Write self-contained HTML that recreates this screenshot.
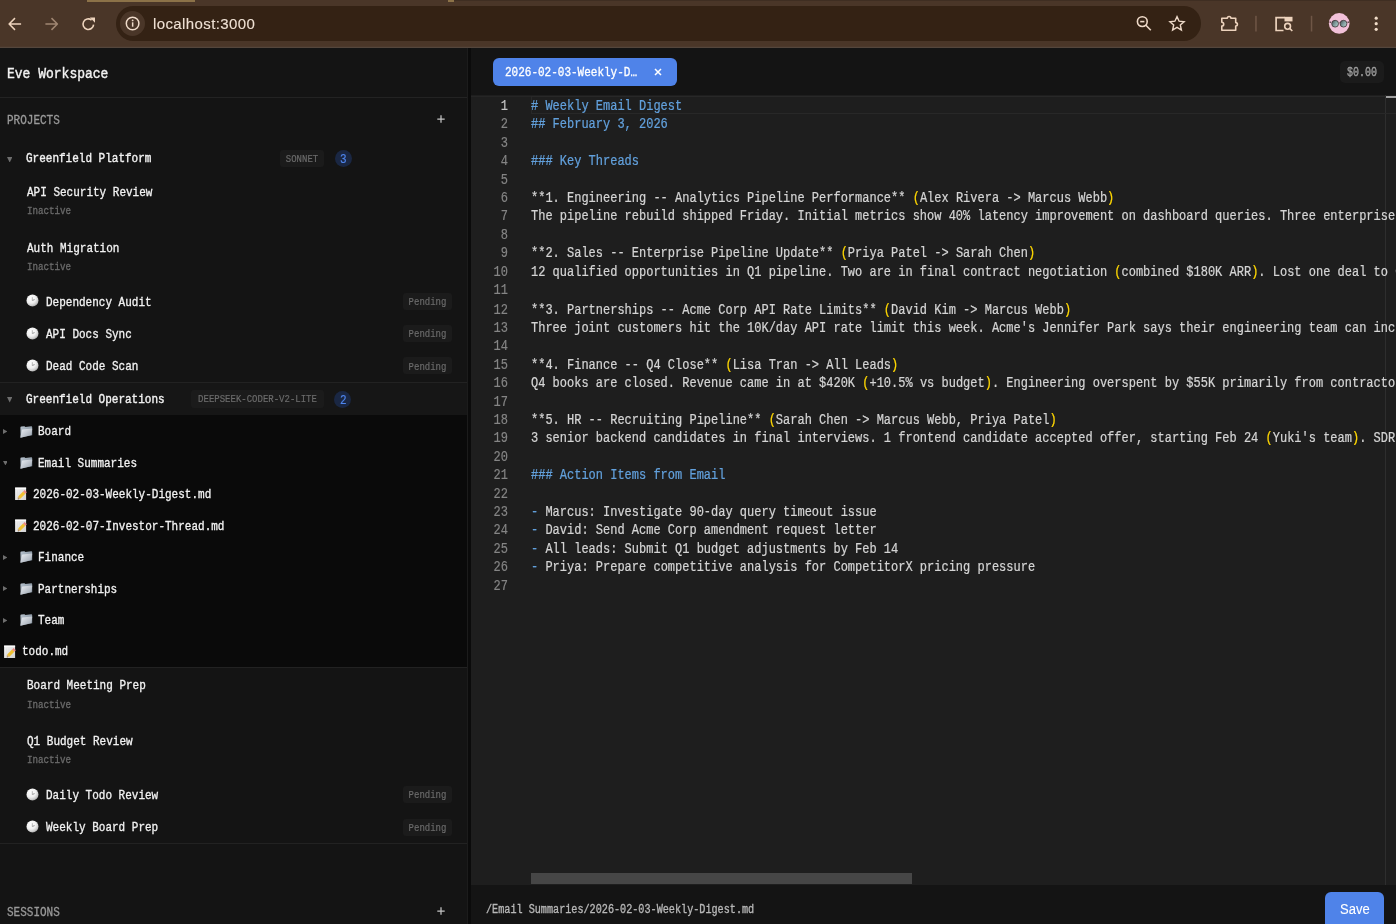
<!DOCTYPE html>
<html><head><meta charset="utf-8"><title>Eve Workspace</title>
<style>
html,body{margin:0;padding:0;}
body{width:1396px;height:924px;overflow:hidden;position:relative;background:#141414;font-family:"Liberation Mono",monospace;}
.t{position:absolute;white-space:pre;transform:scaleY(1.1);will-change:transform;}
.r{position:absolute;}
.code{position:absolute;font-size:12px;-webkit-text-stroke:0.2px currentColor;line-height:16.05217391304348px;white-space:pre;color:#d4d4d4;width:865px;overflow:hidden;transform:translateY(0.35px) scaleY(1.15);transform-origin:0 0;will-change:transform;}
.code .ln{height:16.05217391304348px;}
.h{color:#62a0dc;}
.b{color:#ffd700;}
.gut{position:absolute;width:37px;font-size:12px;-webkit-text-stroke:0.15px currentColor;line-height:16.05217391304348px;text-align:right;color:#858585;transform:translateY(0.35px) scaleY(1.15);transform-origin:0 0;will-change:transform;}
.gut .act{color:#c6c6c6;}
</style></head><body>
<div class="r" style="left:0px;top:0px;width:1396px;height:48px;background:#4a3628;"></div>
<div class="r" style="left:87px;top:0px;width:108px;height:1.5px;background:#8c7248;"></div>
<div class="r" style="left:448px;top:0px;width:6px;height:1.5px;background:#8c7248;"></div>
<div class="r" style="left:454px;top:0px;width:942px;height:1.2px;background:#3f2e22;"></div>
<div class="r" style="left:116px;top:6.3px;width:1085px;height:34.6px;background:#342214;border-radius:17.3px;"></div>
<div class="r" style="left:120px;top:11px;width:25px;height:25px;background:#4a3628;border-radius:50%;"></div>
<svg class="r" style="left:0;top:0" width="1396" height="48">
<g fill="none" stroke="#eed4bd" stroke-width="1.5" stroke-linejoin="round">
<path d="M21.1 24H9.9 M15 18.1L9.1 24L15 29.9"/>
</g>
<g fill="none" stroke="#a08672" stroke-width="1.5" stroke-linejoin="round">
<path d="M45.4 24H56.6 M51.5 18.1L57.4 24L51.5 29.9"/>
</g>
<path fill="none" stroke="#eed4bd" stroke-width="1.6" d="M93.6 24.6 A5.3 5.3 0 1 1 91.6 20"/>
<path d="M89.9 17.6 L95 17.6 L95 22.7 Z" fill="#eed4bd"/>
<circle cx="132.6" cy="23.5" r="6.3" fill="none" stroke="#f0dccb" stroke-width="1.5"/>
<rect x="131.9" y="22.3" width="1.5" height="4.4" fill="#f0dccb"/>
<circle cx="132.65" cy="20.4" r="0.9" fill="#f0dccb"/>
<g fill="none" stroke="#eed9c8" stroke-width="1.6">
<circle cx="1142.3" cy="21.6" r="4.9"/>
<path d="M1145.9 25.2 L1150.8 30.2"/>
<path d="M1140.2 21.6 H1144.4"/>
</g>
<path fill="none" stroke="#eed9c8" stroke-width="1.4" d="M1177 16.6 L1179.1 21.2 L1184.1 21.7 L1180.3 25 L1181.4 30 L1177 27.4 L1172.6 30 L1173.7 25 L1169.9 21.7 L1174.9 21.2 Z"/>
<path fill="none" stroke="#edd3bd" stroke-width="1.6" stroke-linejoin="round" d="M1221.8 18.3 H1227.3 A1.8 1.8 0 0 1 1230.9 18.3 H1235.7 V22.6 A1.7 1.7 0 0 1 1235.7 26 V30.3 H1221.8 V26.1 A1.9 1.9 0 0 0 1221.8 22.3 Z"/>
<rect x="1255.2" y="15.8" width="1.5" height="15.7" fill="#6f5646"/>
<rect x="1310.8" y="15.8" width="1.5" height="15.7" fill="#6f5646"/>
<path fill="none" stroke="#edd3bd" stroke-width="1.7" d="M1283.5 30.5 H1276.1 V17.6 H1285"/>
<rect x="1284.5" y="16.8" width="8" height="4.6" fill="#edd3bd"/>
<circle cx="1287.6" cy="26.3" r="2.9" fill="none" stroke="#edd3bd" stroke-width="1.6"/>
<path d="M1289.7 28.4 L1292.3 31" stroke="#edd3bd" stroke-width="1.6"/>
<defs><linearGradient id="lens" x1="0" y1="0" x2="1" y2="0.6"><stop offset="0" stop-color="#3e4749"/><stop offset="0.55" stop-color="#7e9a9b"/><stop offset="1" stop-color="#a9c6c4"/></linearGradient></defs>
<circle cx="1339.2" cy="23.45" r="10.35" fill="#f2c1d9"/>
<path d="M1331.2 22.3 L1329.6 22.1 M1347.4 22.3 L1349 22.1" stroke="#3a2c2e" stroke-width="1.1"/>
<circle cx="1335.1" cy="23.7" r="3.4" fill="url(#lens)" stroke="#3f3234" stroke-width="0.8"/>
<circle cx="1343.5" cy="23.7" r="3.4" fill="url(#lens)" stroke="#3f3234" stroke-width="0.8"/>
<path d="M1338.5 22.8 Q1339.3 22.3 1340.1 22.8" fill="none" stroke="#6b5656" stroke-width="0.7"/>
<circle cx="1376.2" cy="18.2" r="1.6" fill="#f0dcc8"/>
<circle cx="1376.2" cy="23.7" r="1.6" fill="#f0dcc8"/>
<circle cx="1376.2" cy="29.3" r="1.6" fill="#f0dcc8"/>
</svg>
<div class="t" style="left:152.6px;top:14.34px;font-size:15px;line-height:20px;color:#efe1d4;font-weight:400;font-family:'Liberation Sans',sans-serif;-webkit-text-stroke:0.1px #efe1d4;transform:scaleY(1.0);letter-spacing:0.4px;">localhost:3000</div>
<div class="r" style="left:0px;top:46px;width:1396px;height:1px;background:#4c392c;"></div>
<div class="r" style="left:0px;top:47px;width:1396px;height:1px;background:#54463c;"></div>
<div class="r" style="left:0px;top:48px;width:467px;height:876px;background:#141414;"></div>
<div class="r" style="left:467px;top:48px;width:1px;height:876px;background:#1c1c1c;"></div>
<div class="r" style="left:468px;top:48px;width:3px;height:876px;background:#0b0b0b;"></div>
<div class="t" style="left:7px;top:64.82px;font-size:13px;line-height:20px;color:#f2f2f2;font-weight:400;-webkit-text-stroke:0.35px #f2f2f2;">Eve Workspace</div>
<div class="r" style="left:0px;top:97px;width:467px;height:1px;background:#232323;"></div>
<div class="t" style="left:6.5px;top:111.21px;font-size:11px;line-height:20px;color:#9a9a9a;font-weight:400;-webkit-text-stroke:0.28px #9a9a9a;">PROJECTS</div>
<svg class="r" style="left:436.3px;top:114.4px" width="10" height="10"><path d="M5 1.3V8.7M1.3 5H8.7" stroke="#c4c4c4" stroke-width="1.25"/></svg>
<svg class="r" style="left:6.8px;top:156.5px" width="5.4" height="5.6"><path d="M0 0H5.4L2.7 5.6Z" fill="#6e6e6e"/></svg>
<div class="t" style="left:25.5px;top:148.98px;font-size:11px;line-height:20px;color:#f2f2f2;font-weight:400;-webkit-text-stroke:0.35px #f2f2f2;">Greenfield Platform</div>
<div class="r" style="left:280px;top:150px;width:44px;height:16.5px;background:#1b1b1b;border-radius:3px;"></div>
<div class="t" style="left:280px;top:152.2px;width:44px;height:16.5px;line-height:16.5px;text-align:center;font-size:9px;color:#6c6c6c;-webkit-text-stroke:0.15px #6c6c6c;transform:scaleY(1.22)">SONNET</div>
<div class="r" style="left:334.5px;top:149.5px;width:17px;height:17px;border-radius:50%;background:#1a2743"></div>
<div class="t" style="left:339.7px;top:149.89px;font-size:11px;line-height:20px;color:#4f86ee;font-weight:400;-webkit-text-stroke:0.15px #4f86ee;">3</div>
<div class="t" style="left:27px;top:183.42px;font-size:11px;line-height:20px;color:#f2f2f2;font-weight:400;-webkit-text-stroke:0.28px #f2f2f2;">API Security Review</div>
<div class="t" style="left:27px;top:201.39px;font-size:9.2px;line-height:20px;color:#6a6a6a;font-weight:400;-webkit-text-stroke:0.28px #6a6a6a;transform:scaleY(1.25);">Inactive</div>
<div class="t" style="left:27px;top:238.52px;font-size:11px;line-height:20px;color:#f2f2f2;font-weight:400;-webkit-text-stroke:0.28px #f2f2f2;">Auth Migration</div>
<div class="t" style="left:27px;top:256.59px;font-size:9.2px;line-height:20px;color:#6a6a6a;font-weight:400;-webkit-text-stroke:0.28px #6a6a6a;transform:scaleY(1.25);">Inactive</div>
<svg class="r" style="left:26.299999999999997px;top:294.2px" width="13" height="13"><defs><radialGradient id="cg300" cx="38%" cy="32%" r="72%"><stop offset="0" stop-color="#ffffff"/><stop offset="0.55" stop-color="#f0f0f0"/><stop offset="0.85" stop-color="#c8c8c8"/><stop offset="1" stop-color="#9a9a9a"/></radialGradient></defs><circle cx="6.5" cy="6.5" r="6" fill="url(#cg300)"/><path d="M6.3 6.6V3.2" stroke="#9a9a9a" stroke-width="0.7"/><path d="M6.4 6.4L8.6 5.6" stroke="#8a8a8a" stroke-width="0.9"/></svg>
<div class="t" style="left:46px;top:292.59px;font-size:11px;line-height:20px;color:#f2f2f2;font-weight:400;-webkit-text-stroke:0.28px #f2f2f2;">Dependency Audit</div>
<div class="r" style="left:403px;top:292.7px;width:49px;height:17px;background:#1b1b1b;border-radius:3px;"></div>
<div class="t" style="left:403px;top:294.9px;width:49px;height:17px;line-height:17px;text-align:center;font-size:9px;color:#6c6c6c;-webkit-text-stroke:0.15px #6c6c6c;transform:scaleY(1.22)">Pending</div>
<svg class="r" style="left:26.299999999999997px;top:326.6px" width="13" height="13"><defs><radialGradient id="cg333" cx="38%" cy="32%" r="72%"><stop offset="0" stop-color="#ffffff"/><stop offset="0.55" stop-color="#f0f0f0"/><stop offset="0.85" stop-color="#c8c8c8"/><stop offset="1" stop-color="#9a9a9a"/></radialGradient></defs><circle cx="6.5" cy="6.5" r="6" fill="url(#cg333)"/><path d="M6.3 6.6V3.2" stroke="#9a9a9a" stroke-width="0.7"/><path d="M6.4 6.4L8.6 5.6" stroke="#8a8a8a" stroke-width="0.9"/></svg>
<div class="t" style="left:46px;top:325.42px;font-size:11px;line-height:20px;color:#f2f2f2;font-weight:400;-webkit-text-stroke:0.28px #f2f2f2;">API Docs Sync</div>
<div class="r" style="left:403px;top:325.1px;width:49px;height:17px;background:#1b1b1b;border-radius:3px;"></div>
<div class="t" style="left:403px;top:327.3px;width:49px;height:17px;line-height:17px;text-align:center;font-size:9px;color:#6c6c6c;-webkit-text-stroke:0.15px #6c6c6c;transform:scaleY(1.22)">Pending</div>
<svg class="r" style="left:26.299999999999997px;top:358.95px" width="13" height="13"><defs><radialGradient id="cg365" cx="38%" cy="32%" r="72%"><stop offset="0" stop-color="#ffffff"/><stop offset="0.55" stop-color="#f0f0f0"/><stop offset="0.85" stop-color="#c8c8c8"/><stop offset="1" stop-color="#9a9a9a"/></radialGradient></defs><circle cx="6.5" cy="6.5" r="6" fill="url(#cg365)"/><path d="M6.3 6.6V3.2" stroke="#9a9a9a" stroke-width="0.7"/><path d="M6.4 6.4L8.6 5.6" stroke="#8a8a8a" stroke-width="0.9"/></svg>
<div class="t" style="left:46px;top:357.09px;font-size:11px;line-height:20px;color:#f2f2f2;font-weight:400;-webkit-text-stroke:0.28px #f2f2f2;">Dead Code Scan</div>
<div class="r" style="left:403px;top:357.45px;width:49px;height:17px;background:#1b1b1b;border-radius:3px;"></div>
<div class="t" style="left:403px;top:359.65px;width:49px;height:17px;line-height:17px;text-align:center;font-size:9px;color:#6c6c6c;-webkit-text-stroke:0.15px #6c6c6c;transform:scaleY(1.22)">Pending</div>
<div class="r" style="left:0px;top:382px;width:467px;height:1px;background:#222;"></div>
<div class="r" style="left:0px;top:383px;width:467px;height:32px;background:#161616;"></div>
<svg class="r" style="left:6.8px;top:397.3px" width="5.4" height="5.6"><path d="M0 0H5.4L2.7 5.6Z" fill="#6e6e6e"/></svg>
<div class="t" style="left:25.5px;top:390.08px;font-size:11px;line-height:20px;color:#f2f2f2;font-weight:400;-webkit-text-stroke:0.35px #f2f2f2;">Greenfield Operations</div>
<div class="r" style="left:191px;top:390px;width:133px;height:17.5px;background:#1b1b1b;border-radius:3px;"></div>
<div class="t" style="left:191px;top:392.2px;width:133px;height:17.5px;line-height:17.5px;text-align:center;font-size:9px;color:#6c6c6c;-webkit-text-stroke:0.15px #6c6c6c;transform:scaleY(1.22)">DEEPSEEK-CODER-V2-LITE</div>
<div class="r" style="left:334.3px;top:390.5px;width:17px;height:17px;border-radius:50%;background:#1a2743"></div>
<div class="t" style="left:339.5px;top:390.89px;font-size:11px;line-height:20px;color:#4f86ee;font-weight:400;-webkit-text-stroke:0.15px #4f86ee;">2</div>
<div class="r" style="left:0px;top:415px;width:467px;height:252px;background:#0a0a0a;"></div>
<svg class="r" style="left:2.75px;top:429.0px" width="4.5" height="5"><path d="M0 0L4.5 2.5L0 5Z" fill="#6e6e6e"/></svg>
<svg class="r" style="left:19.8px;top:425.5px" width="13" height="12"><defs><linearGradient id="fgb" x1="0" y1="0" x2="1" y2="1"><stop offset="0" stop-color="#b9c4cf"/><stop offset="1" stop-color="#6f7d8a"/></linearGradient><linearGradient id="fgf" x1="0" y1="0" x2="1" y2="1"><stop offset="0" stop-color="#eef1f5"/><stop offset="0.5" stop-color="#c3c9d1"/><stop offset="1" stop-color="#9aa2ac"/></linearGradient></defs><path d="M0.4 1.6 Q0.4 0.6 1.4 0.5 L4.2 0.2 Q5 0.2 5.4 0.9 L11.3 0.3 Q12.2 0.3 12.2 1.2 V9.2 L0.6 11.6 Z" fill="url(#fgb)"/><path d="M2.4 3.6 L11.9 2.5 Q12.3 2.5 12.2 3 L11.4 9.1 L0.9 11.7 Q0.3 11.8 0.4 11.2 L1.9 4 Q2 3.6 2.4 3.6 Z" fill="url(#fgf)"/></svg>
<div class="t" style="left:38px;top:421.99px;font-size:11px;line-height:20px;color:#f2f2f2;font-weight:400;-webkit-text-stroke:0.28px #f2f2f2;">Board</div>
<svg class="r" style="left:2.6px;top:460.85px" width="4.8" height="4.4"><path d="M0 0H4.8L2.4 4.4Z" fill="#6e6e6e"/></svg>
<svg class="r" style="left:19.8px;top:457.05px" width="13" height="12"><defs><linearGradient id="fgb" x1="0" y1="0" x2="1" y2="1"><stop offset="0" stop-color="#b9c4cf"/><stop offset="1" stop-color="#6f7d8a"/></linearGradient><linearGradient id="fgf" x1="0" y1="0" x2="1" y2="1"><stop offset="0" stop-color="#eef1f5"/><stop offset="0.5" stop-color="#c3c9d1"/><stop offset="1" stop-color="#9aa2ac"/></linearGradient></defs><path d="M0.4 1.6 Q0.4 0.6 1.4 0.5 L4.2 0.2 Q5 0.2 5.4 0.9 L11.3 0.3 Q12.2 0.3 12.2 1.2 V9.2 L0.6 11.6 Z" fill="url(#fgb)"/><path d="M2.4 3.6 L11.9 2.5 Q12.3 2.5 12.2 3 L11.4 9.1 L0.9 11.7 Q0.3 11.8 0.4 11.2 L1.9 4 Q2 3.6 2.4 3.6 Z" fill="url(#fgf)"/></svg>
<div class="t" style="left:38px;top:454.09px;font-size:11px;line-height:20px;color:#f2f2f2;font-weight:400;-webkit-text-stroke:0.28px #f2f2f2;">Email Summaries</div>
<svg class="r" style="left:15.1px;top:487.4px" width="12" height="13"><defs><linearGradient id="mg" x1="0" y1="0" x2="1" y2="1"><stop offset="0" stop-color="#f4f4f4"/><stop offset="1" stop-color="#d2d2d2"/></linearGradient></defs><rect x="0.1" y="0.6" width="11" height="12.5" fill="url(#mg)"/><rect x="0.1" y="0.6" width="11" height="1.2" fill="#ffffff"/><path d="M2.5 3.5V12M5 3.5V12M7.5 3.5V9" stroke="#dcdcdc" stroke-width="0.4"/><path d="M4.2 10.6 L9.2 5.6" stroke="#f0c132" stroke-width="3.1" stroke-linecap="butt"/><path d="M9.2 5.6 L10.7 4.1" stroke="#ec8a84" stroke-width="3.1"/><path d="M4.2 10.6 L3.1 11.7" stroke="#caa26a" stroke-width="2"/><path d="M3.4 12.2 L2.9 12.6" stroke="#444" stroke-width="0.9"/></svg>
<div class="t" style="left:32.8px;top:484.98px;font-size:11px;line-height:20px;color:#f2f2f2;font-weight:400;-webkit-text-stroke:0.28px #f2f2f2;">2026-02-03-Weekly-Digest.md</div>
<svg class="r" style="left:15.1px;top:519.05px" width="12" height="13"><defs><linearGradient id="mg" x1="0" y1="0" x2="1" y2="1"><stop offset="0" stop-color="#f4f4f4"/><stop offset="1" stop-color="#d2d2d2"/></linearGradient></defs><rect x="0.1" y="0.6" width="11" height="12.5" fill="url(#mg)"/><rect x="0.1" y="0.6" width="11" height="1.2" fill="#ffffff"/><path d="M2.5 3.5V12M5 3.5V12M7.5 3.5V9" stroke="#dcdcdc" stroke-width="0.4"/><path d="M4.2 10.6 L9.2 5.6" stroke="#f0c132" stroke-width="3.1" stroke-linecap="butt"/><path d="M9.2 5.6 L10.7 4.1" stroke="#ec8a84" stroke-width="3.1"/><path d="M4.2 10.6 L3.1 11.7" stroke="#caa26a" stroke-width="2"/><path d="M3.4 12.2 L2.9 12.6" stroke="#444" stroke-width="0.9"/></svg>
<div class="t" style="left:32.8px;top:517.28px;font-size:11px;line-height:20px;color:#f2f2f2;font-weight:400;-webkit-text-stroke:0.28px #f2f2f2;">2026-02-07-Investor-Thread.md</div>
<svg class="r" style="left:2.75px;top:554.6px" width="4.5" height="5"><path d="M0 0L4.5 2.5L0 5Z" fill="#6e6e6e"/></svg>
<svg class="r" style="left:19.8px;top:551.1px" width="13" height="12"><defs><linearGradient id="fgb" x1="0" y1="0" x2="1" y2="1"><stop offset="0" stop-color="#b9c4cf"/><stop offset="1" stop-color="#6f7d8a"/></linearGradient><linearGradient id="fgf" x1="0" y1="0" x2="1" y2="1"><stop offset="0" stop-color="#eef1f5"/><stop offset="0.5" stop-color="#c3c9d1"/><stop offset="1" stop-color="#9aa2ac"/></linearGradient></defs><path d="M0.4 1.6 Q0.4 0.6 1.4 0.5 L4.2 0.2 Q5 0.2 5.4 0.9 L11.3 0.3 Q12.2 0.3 12.2 1.2 V9.2 L0.6 11.6 Z" fill="url(#fgb)"/><path d="M2.4 3.6 L11.9 2.5 Q12.3 2.5 12.2 3 L11.4 9.1 L0.9 11.7 Q0.3 11.8 0.4 11.2 L1.9 4 Q2 3.6 2.4 3.6 Z" fill="url(#fgf)"/></svg>
<div class="t" style="left:38px;top:548.15px;font-size:11px;line-height:20px;color:#f2f2f2;font-weight:400;-webkit-text-stroke:0.28px #f2f2f2;">Finance</div>
<svg class="r" style="left:2.75px;top:586.3000000000001px" width="4.5" height="5"><path d="M0 0L4.5 2.5L0 5Z" fill="#6e6e6e"/></svg>
<svg class="r" style="left:19.8px;top:582.8000000000001px" width="13" height="12"><defs><linearGradient id="fgb" x1="0" y1="0" x2="1" y2="1"><stop offset="0" stop-color="#b9c4cf"/><stop offset="1" stop-color="#6f7d8a"/></linearGradient><linearGradient id="fgf" x1="0" y1="0" x2="1" y2="1"><stop offset="0" stop-color="#eef1f5"/><stop offset="0.5" stop-color="#c3c9d1"/><stop offset="1" stop-color="#9aa2ac"/></linearGradient></defs><path d="M0.4 1.6 Q0.4 0.6 1.4 0.5 L4.2 0.2 Q5 0.2 5.4 0.9 L11.3 0.3 Q12.2 0.3 12.2 1.2 V9.2 L0.6 11.6 Z" fill="url(#fgb)"/><path d="M2.4 3.6 L11.9 2.5 Q12.3 2.5 12.2 3 L11.4 9.1 L0.9 11.7 Q0.3 11.8 0.4 11.2 L1.9 4 Q2 3.6 2.4 3.6 Z" fill="url(#fgf)"/></svg>
<div class="t" style="left:38px;top:579.61px;font-size:11px;line-height:20px;color:#f2f2f2;font-weight:400;-webkit-text-stroke:0.28px #f2f2f2;">Partnerships</div>
<svg class="r" style="left:2.75px;top:617.5px" width="4.5" height="5"><path d="M0 0L4.5 2.5L0 5Z" fill="#6e6e6e"/></svg>
<svg class="r" style="left:19.8px;top:614.0px" width="13" height="12"><defs><linearGradient id="fgb" x1="0" y1="0" x2="1" y2="1"><stop offset="0" stop-color="#b9c4cf"/><stop offset="1" stop-color="#6f7d8a"/></linearGradient><linearGradient id="fgf" x1="0" y1="0" x2="1" y2="1"><stop offset="0" stop-color="#eef1f5"/><stop offset="0.5" stop-color="#c3c9d1"/><stop offset="1" stop-color="#9aa2ac"/></linearGradient></defs><path d="M0.4 1.6 Q0.4 0.6 1.4 0.5 L4.2 0.2 Q5 0.2 5.4 0.9 L11.3 0.3 Q12.2 0.3 12.2 1.2 V9.2 L0.6 11.6 Z" fill="url(#fgb)"/><path d="M2.4 3.6 L11.9 2.5 Q12.3 2.5 12.2 3 L11.4 9.1 L0.9 11.7 Q0.3 11.8 0.4 11.2 L1.9 4 Q2 3.6 2.4 3.6 Z" fill="url(#fgf)"/></svg>
<div class="t" style="left:38px;top:610.98px;font-size:11px;line-height:20px;color:#f2f2f2;font-weight:400;-webkit-text-stroke:0.28px #f2f2f2;">Team</div>
<svg class="r" style="left:4.1px;top:644.7px" width="12" height="13"><defs><linearGradient id="mg" x1="0" y1="0" x2="1" y2="1"><stop offset="0" stop-color="#f4f4f4"/><stop offset="1" stop-color="#d2d2d2"/></linearGradient></defs><rect x="0.1" y="0.6" width="11" height="12.5" fill="url(#mg)"/><rect x="0.1" y="0.6" width="11" height="1.2" fill="#ffffff"/><path d="M2.5 3.5V12M5 3.5V12M7.5 3.5V9" stroke="#dcdcdc" stroke-width="0.4"/><path d="M4.2 10.6 L9.2 5.6" stroke="#f0c132" stroke-width="3.1" stroke-linecap="butt"/><path d="M9.2 5.6 L10.7 4.1" stroke="#ec8a84" stroke-width="3.1"/><path d="M4.2 10.6 L3.1 11.7" stroke="#caa26a" stroke-width="2"/><path d="M3.4 12.2 L2.9 12.6" stroke="#444" stroke-width="0.9"/></svg>
<div class="t" style="left:21.8px;top:641.89px;font-size:11px;line-height:20px;color:#f2f2f2;font-weight:400;-webkit-text-stroke:0.28px #f2f2f2;">todo.md</div>
<div class="r" style="left:0px;top:667px;width:467px;height:1px;background:#222;"></div>
<div class="t" style="left:27px;top:676.19px;font-size:11px;line-height:20px;color:#f2f2f2;font-weight:400;-webkit-text-stroke:0.28px #f2f2f2;">Board Meeting Prep</div>
<div class="t" style="left:27px;top:694.79px;font-size:9.2px;line-height:20px;color:#6a6a6a;font-weight:400;-webkit-text-stroke:0.28px #6a6a6a;transform:scaleY(1.25);">Inactive</div>
<div class="t" style="left:27px;top:731.82px;font-size:11px;line-height:20px;color:#f2f2f2;font-weight:400;-webkit-text-stroke:0.28px #f2f2f2;">Q1 Budget Review</div>
<div class="t" style="left:27px;top:750.19px;font-size:9.2px;line-height:20px;color:#6a6a6a;font-weight:400;-webkit-text-stroke:0.28px #6a6a6a;transform:scaleY(1.25);">Inactive</div>
<svg class="r" style="left:26.299999999999997px;top:787.7px" width="13" height="13"><defs><radialGradient id="cg794" cx="38%" cy="32%" r="72%"><stop offset="0" stop-color="#ffffff"/><stop offset="0.55" stop-color="#f0f0f0"/><stop offset="0.85" stop-color="#c8c8c8"/><stop offset="1" stop-color="#9a9a9a"/></radialGradient></defs><circle cx="6.5" cy="6.5" r="6" fill="url(#cg794)"/><path d="M6.3 6.6V3.2" stroke="#9a9a9a" stroke-width="0.7"/><path d="M6.4 6.4L8.6 5.6" stroke="#8a8a8a" stroke-width="0.9"/></svg>
<div class="t" style="left:46px;top:785.99px;font-size:11px;line-height:20px;color:#f2f2f2;font-weight:400;-webkit-text-stroke:0.28px #f2f2f2;">Daily Todo Review</div>
<div class="r" style="left:403px;top:786.2px;width:49px;height:17px;background:#1b1b1b;border-radius:3px;"></div>
<div class="t" style="left:403px;top:788.4000000000001px;width:49px;height:17px;line-height:17px;text-align:center;font-size:9px;color:#6c6c6c;-webkit-text-stroke:0.15px #6c6c6c;transform:scaleY(1.22)">Pending</div>
<svg class="r" style="left:26.299999999999997px;top:820.05px" width="13" height="13"><defs><radialGradient id="cg826" cx="38%" cy="32%" r="72%"><stop offset="0" stop-color="#ffffff"/><stop offset="0.55" stop-color="#f0f0f0"/><stop offset="0.85" stop-color="#c8c8c8"/><stop offset="1" stop-color="#9a9a9a"/></radialGradient></defs><circle cx="6.5" cy="6.5" r="6" fill="url(#cg826)"/><path d="M6.3 6.6V3.2" stroke="#9a9a9a" stroke-width="0.7"/><path d="M6.4 6.4L8.6 5.6" stroke="#8a8a8a" stroke-width="0.9"/></svg>
<div class="t" style="left:46px;top:818.29px;font-size:11px;line-height:20px;color:#f2f2f2;font-weight:400;-webkit-text-stroke:0.28px #f2f2f2;">Weekly Board Prep</div>
<div class="r" style="left:403px;top:818.55px;width:49px;height:17px;background:#1b1b1b;border-radius:3px;"></div>
<div class="t" style="left:403px;top:820.75px;width:49px;height:17px;line-height:17px;text-align:center;font-size:9px;color:#6c6c6c;-webkit-text-stroke:0.15px #6c6c6c;transform:scaleY(1.22)">Pending</div>
<div class="r" style="left:0px;top:843px;width:467px;height:1px;background:#222;"></div>
<div class="t" style="left:6.5px;top:902.99px;font-size:11px;line-height:20px;color:#9a9a9a;font-weight:400;-webkit-text-stroke:0.28px #9a9a9a;">SESSIONS</div>
<svg class="r" style="left:436.3px;top:906px" width="10" height="10"><path d="M5 1.3V8.7M1.3 5H8.7" stroke="#c4c4c4" stroke-width="1.25"/></svg>
<div class="r" style="left:471px;top:48px;width:925px;height:47px;background:#141414;"></div>
<div class="r" style="left:493px;top:57.5px;width:184px;height:28.7px;background:#4f83e9;border-radius:6px;"></div>
<div class="t" style="left:505px;top:63.39px;font-size:11px;line-height:20px;color:#ffffff;font-weight:400;-webkit-text-stroke:0.28px #ffffff;">2026-02-03-Weekly-D…</div>
<svg class="r" style="left:654px;top:68px" width="8" height="8"><path d="M1 1L7 7M7 1L1 7" stroke="#fff" stroke-width="1.5"/></svg>
<div class="r" style="left:1339.5px;top:61px;width:44px;height:22px;background:#1b1b1b;border-radius:5px;"></div>
<div class="t" style="left:1346.5px;top:63.33px;font-size:10px;line-height:20px;color:#a0a0a0;font-weight:400;-webkit-text-stroke:0.28px #a0a0a0;transform:scaleY(1.25);">$0.00</div>
<div class="r" style="left:471px;top:95px;width:925px;height:790px;background:#1e1e1e;"></div>
<div class="r" style="left:471px;top:96px;width:925px;height:1px;background:#252525;"></div>
<div class="r" style="left:1385px;top:95px;width:1px;height:790px;background:#2e2e2e;"></div>
<div class="r" style="left:531px;top:96px;width:880px;height:18.46px;background:transparent;box-sizing:border-box;border:1px solid #282828;"></div>
<div class="code" style="left:531px;top:97.0px;"><div class="ln"><span class="h"># Weekly Email Digest</span></div><div class="ln"><span class="h">## February 3, 2026</span></div><div class="ln">&nbsp;</div><div class="ln"><span class="h">### Key Threads</span></div><div class="ln">&nbsp;</div><div class="ln"><span class="n">**1. Engineering -- Analytics Pipeline Performance** </span><span class="b">(</span><span class="n">Alex Rivera -&gt; Marcus Webb</span><span class="b">)</span></div><div class="ln"><span class="n">The pipeline rebuild shipped Friday. Initial metrics show 40% latency improvement on dashboard queries. Three enterprise customers</span></div><div class="ln">&nbsp;</div><div class="ln"><span class="n">**2. Sales -- Enterprise Pipeline Update** </span><span class="b">(</span><span class="n">Priya Patel -&gt; Sarah Chen</span><span class="b">)</span></div><div class="ln"><span class="n">12 qualified opportunities in Q1 pipeline. Two are in final contract negotiation </span><span class="b">(</span><span class="n">combined $180K ARR</span><span class="b">)</span><span class="n">. Lost one deal to CompetitorX</span></div><div class="ln">&nbsp;</div><div class="ln"><span class="n">**3. Partnerships -- Acme Corp API Rate Limits** </span><span class="b">(</span><span class="n">David Kim -&gt; Marcus Webb</span><span class="b">)</span></div><div class="ln"><span class="n">Three joint customers hit the 10K/day API rate limit this week. Acme&#x27;s Jennifer Park says their engineering team can increase</span></div><div class="ln">&nbsp;</div><div class="ln"><span class="n">**4. Finance -- Q4 Close** </span><span class="b">(</span><span class="n">Lisa Tran -&gt; All Leads</span><span class="b">)</span></div><div class="ln"><span class="n">Q4 books are closed. Revenue came in at $420K </span><span class="b">(</span><span class="n">+10.5% vs budget</span><span class="b">)</span><span class="n">. Engineering overspent by $55K primarily from contractors</span></div><div class="ln">&nbsp;</div><div class="ln"><span class="n">**5. HR -- Recruiting Pipeline** </span><span class="b">(</span><span class="n">Sarah Chen -&gt; Marcus Webb, Priya Patel</span><span class="b">)</span></div><div class="ln"><span class="n">3 senior backend candidates in final interviews. 1 frontend candidate accepted offer, starting Feb 24 </span><span class="b">(</span><span class="n">Yuki&#x27;s team</span><span class="b">)</span><span class="n">. SDR hiring</span></div><div class="ln">&nbsp;</div><div class="ln"><span class="h">### Action Items from Email</span></div><div class="ln">&nbsp;</div><div class="ln"><span class="h">- </span><span class="n">Marcus: Investigate 90-day query timeout issue</span></div><div class="ln"><span class="h">- </span><span class="n">David: Send Acme Corp amendment request letter</span></div><div class="ln"><span class="h">- </span><span class="n">All leads: Submit Q1 budget adjustments by Feb 14</span></div><div class="ln"><span class="h">- </span><span class="n">Priya: Prepare competitive analysis for CompetitorX pricing pressure</span></div><div class="ln">&nbsp;</div></div>
<div class="gut" style="left:471px;top:97.0px;"><div class="ln act">1</div><div class="ln">2</div><div class="ln">3</div><div class="ln">4</div><div class="ln">5</div><div class="ln">6</div><div class="ln">7</div><div class="ln">8</div><div class="ln">9</div><div class="ln">10</div><div class="ln">11</div><div class="ln">12</div><div class="ln">13</div><div class="ln">14</div><div class="ln">15</div><div class="ln">16</div><div class="ln">17</div><div class="ln">18</div><div class="ln">19</div><div class="ln">20</div><div class="ln">21</div><div class="ln">22</div><div class="ln">23</div><div class="ln">24</div><div class="ln">25</div><div class="ln">26</div><div class="ln">27</div></div>
<div class="r" style="left:1386px;top:96px;width:10px;height:2px;background:#a0a0a0;"></div>
<div class="r" style="left:531px;top:873px;width:381px;height:11px;background:#464646;"></div>
<div class="r" style="left:471px;top:885px;width:925px;height:39px;background:#141414;"></div>
<div class="t" style="left:486px;top:901.24px;font-size:10.17px;line-height:20px;color:#b8b8b8;font-weight:400;-webkit-text-stroke:0.28px #b8b8b8;transform:scaleY(1.2);">/Email Summaries/2026-02-03-Weekly-Digest.md</div>
<div class="r" style="left:1325.3px;top:892.4px;width:58.6px;height:40px;background:#4f83e9;border-radius:6px;"></div>
<div class="t" style="left:1339.6px;top:900.42px;font-size:13px;line-height:20px;color:#ffffff;font-weight:400;font-family:'Liberation Sans',sans-serif;-webkit-text-stroke:0.1px #ffffff;">Save</div>

</body></html>
